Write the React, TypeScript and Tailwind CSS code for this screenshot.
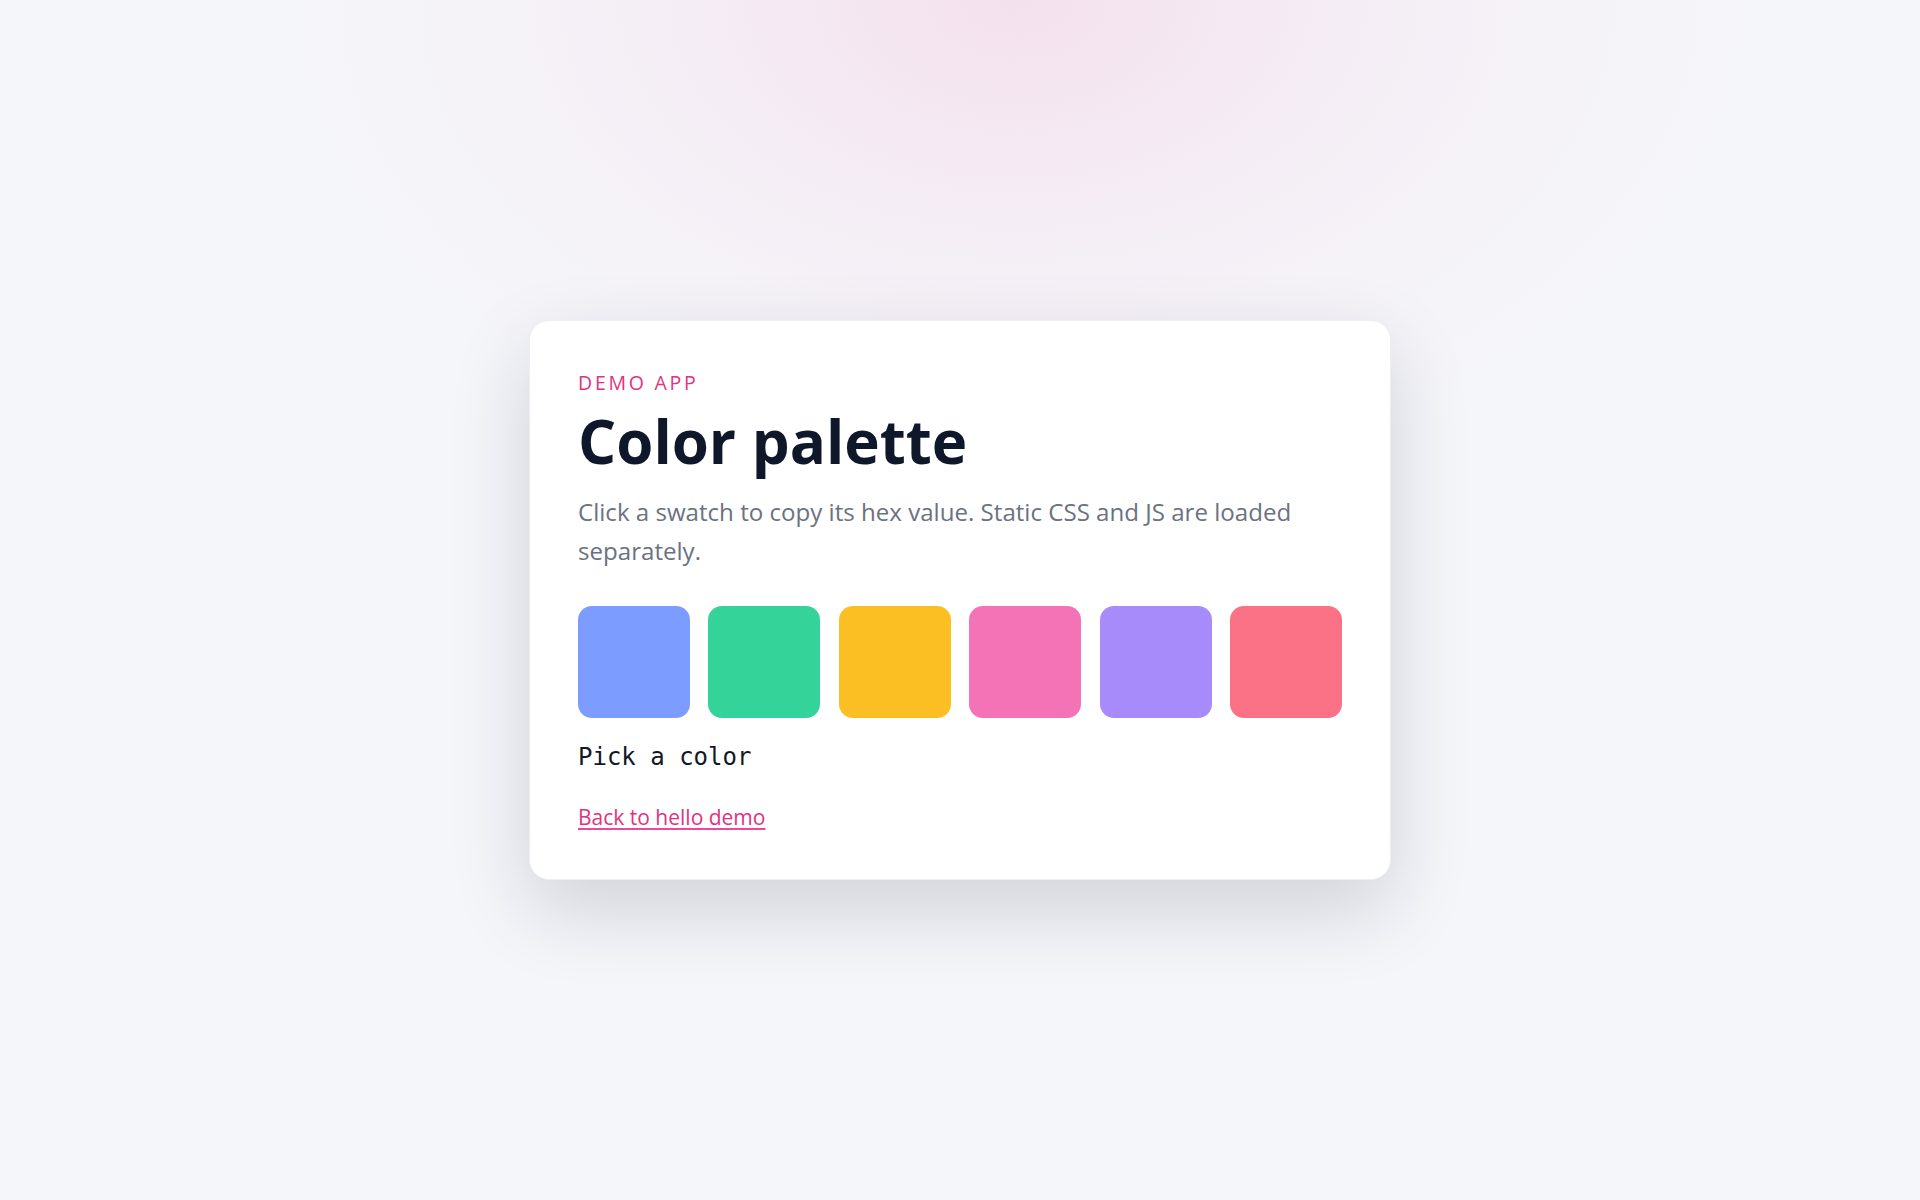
import React from 'react';

const swatches = ['#7c9dff', '#34d399', '#fbbf24', '#f472b6', '#a78bfa', '#fb7185'];

const App = () => {
  return (
    <div className="min-h-screen w-full flex items-center justify-center bg-[#f5f6fa] bg-[radial-gradient(760px_500px_at_53%_0%,rgba(236,72,153,0.12),rgba(236,72,153,0.06)_40%,rgba(236,72,153,0.02)_70%,transparent_100%)] font-['Open_Sans','Noto_Sans',sans-serif]">
      <main className="w-[862px] rounded-[20px] border border-[#eceef3] bg-white px-12 pt-12 pb-[46px] shadow-[0_30px_80px_rgba(15,23,42,0.16)]">
        <p className="text-[19.5px] leading-[28px] tracking-[0.14em] uppercase text-[#e1327f]">Demo app</p>
        <h1 className="mt-[11px] text-[60px] leading-[66px] font-bold text-[#0f172a]">Color palette</h1>
        <p className="mt-[18px] text-[24.1px] leading-[39px] text-[#6b7280]">
          Click a swatch to copy its hex value. Static CSS and JS are loaded separately.
        </p>

        <div className="mt-9 grid grid-cols-6 gap-[18.7px]">
          {swatches.map((c) => (
            <button
              key={c}
              type="button"
              title={c}
              className="aspect-square rounded-[14px] cursor-pointer"
              style={{ backgroundColor: c }}
            />
          ))}
        </div>

        <p className="mt-[21px] font-['DejaVu_Sans_Mono',monospace] text-[24px] leading-[36px] text-[#111827]">
          Pick a color
        </p>

        <div className="mt-[27px] text-[21px] leading-[31.5px]">
          <a href="#" className="text-[#e1327f] underline decoration-[#ec4899] underline-offset-[3px]">
            Back to hello demo
          </a>
        </div>
      </main>
    </div>
  );
};

export default App;
